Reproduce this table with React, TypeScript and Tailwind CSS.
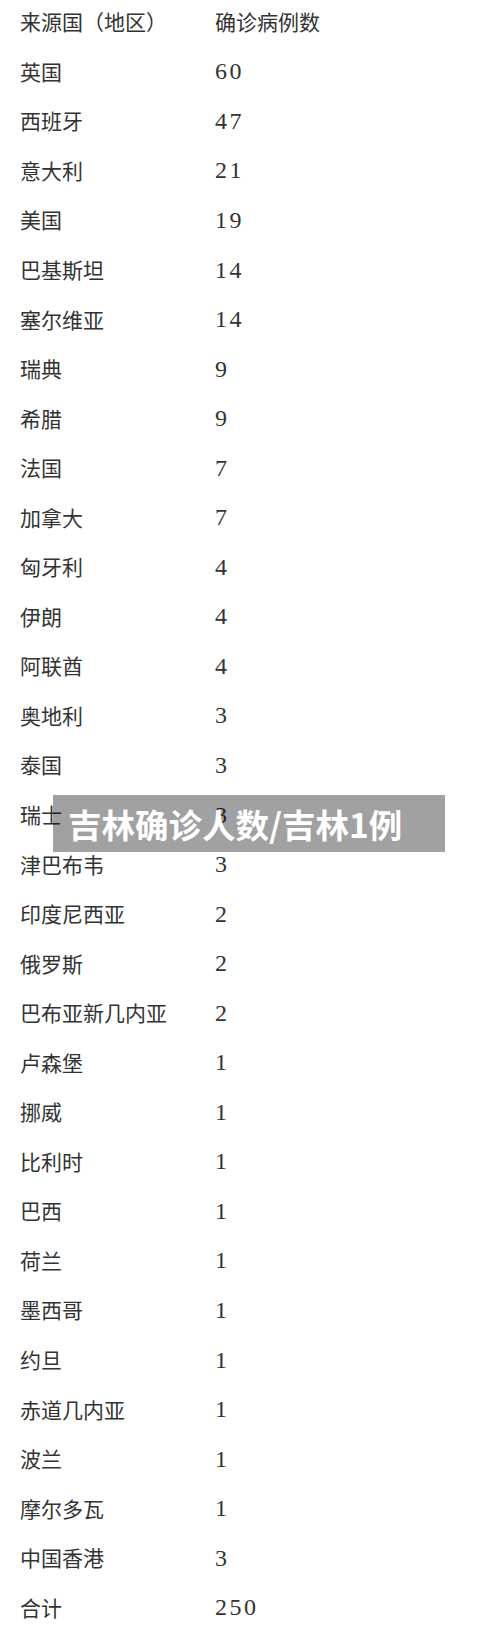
const rows: [string, string][] = [
  ["来源国（地区）", "确诊病例数"],
  ["英国", "60"],
  ["西班牙", "47"],
  ["意大利", "21"],
  ["美国", "19"],
  ["巴基斯坦", "14"],
  ["塞尔维亚", "14"],
  ["瑞典", "9"],
  ["希腊", "9"],
  ["法国", "7"],
  ["加拿大", "7"],
  ["匈牙利", "4"],
  ["伊朗", "4"],
  ["阿联酋", "4"],
  ["奥地利", "3"],
  ["泰国", "3"],
  ["瑞士", "3"],
  ["津巴布韦", "3"],
  ["印度尼西亚", "2"],
  ["俄罗斯", "2"],
  ["巴布亚新几内亚", "2"],
  ["卢森堡", "1"],
  ["挪威", "1"],
  ["比利时", "1"],
  ["巴西", "1"],
  ["荷兰", "1"],
  ["墨西哥", "1"],
  ["约旦", "1"],
  ["赤道几内亚", "1"],
  ["波兰", "1"],
  ["摩尔多瓦", "1"],
  ["中国香港", "3"],
  ["合计", "250"],
];

const cjk = "font-['Noto_Sans_CJK_SC',sans-serif]";

// full-width parens keep their whole em box, as in the printed table
function Place({ text }: { text: string }) {
  const parts = text.split(/([（）])/).filter(Boolean);
  return (
    <span className={`${cjk} text-[21px] leading-none whitespace-nowrap inline-flex items-center`}>
      {parts.map((p, i) =>
        p === "（" || p === "）" ? (
          <span
            key={i}
            className="inline-flex w-[1em] justify-center [text-spacing-trim:space-all] [font-feature-settings:'fwid']"
          >
            {p}
          </span>
        ) : (
          <span key={i}>{p}</span>
        )
      )}
    </span>
  );
}

export default function App() {
  return (
    <div className="relative w-[500px] h-[1647px] overflow-hidden bg-white text-[#333]">
      <div className="-mt-[3px] pl-[20px]">
        {rows.map(([place, count], i) => (
          <div key={i} className="grid grid-cols-[195px_1fr] items-center h-[49.56px]">
            <Place text={place} />
            {i === 0 ? (
              <span className={`${cjk} text-[21px] leading-none`}>{count}</span>
            ) : (
              <span className="font-['Liberation_Serif',serif] text-[24px] leading-none tracking-[2.5px]">
                {count}
              </span>
            )}
          </div>
        ))}
      </div>
      <div className="absolute left-[53px] top-[795px] w-[392px] h-[57px] flex items-center pl-[15px] bg-[rgba(0,0,0,0.37)]">
        <span className={`${cjk} text-[33.5px] font-bold leading-none text-white`}>
          吉林确诊人数/吉林1例
        </span>
      </div>
    </div>
  );
}
